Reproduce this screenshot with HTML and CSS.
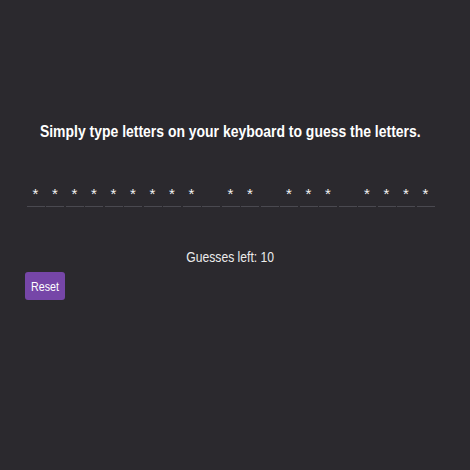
FILE: index.html
```html
<!DOCTYPE html>
<html>
<head>
<meta charset="utf-8">
<link rel="stylesheet" href="styles.css">
</head>
<body>
<main class="app">
  <h1 class="title"><span class="narrow narrow-title">Simply type letters on your keyboard to guess the letters.</span></h1>
  <div class="word">
    <span class="slot">*</span><span class="slot">*</span><span class="slot">*</span><span class="slot">*</span><span class="slot">*</span><span class="slot">*</span><span class="slot">*</span><span class="slot">*</span><span class="slot">*</span>
    <span class="slot"></span>
    <span class="slot">*</span><span class="slot">*</span>
    <span class="slot"></span>
    <span class="slot">*</span><span class="slot">*</span><span class="slot">*</span>
    <span class="slot"></span>
    <span class="slot">*</span><span class="slot">*</span><span class="slot">*</span><span class="slot">*</span>
  </div>
  <p class="guesses"><span class="narrow narrow-guesses">Guesses left: 10</span></p>
  <div class="controls">
    <button class="reset"><span class="narrow narrow-reset">Reset</span></button>
  </div>
</main>
</body>
</html>
```
FILE: styles.css
```css
html, body {
  margin: 0;
  padding: 0;
  background: #2b292e;
}
body {
  font-family: "Liberation Sans", Arial, sans-serif;
  color: #ffffff;
  width: 470px;
  height: 470px;
}
.app {
  display: flex;
  flex-direction: column;
  padding: 122px 9px 0 0;
}
.narrow {
  display: inline-block;
  white-space: nowrap;
  transform-origin: center;
}
.narrow-title {
  transform: scaleX(0.872);
}
.narrow-guesses {
  transform: scaleX(0.81);
}
.narrow-reset {
  transform: scaleX(0.82);
}
.title {
  margin: 0;
  font-size: 16px;
  line-height: 20px;
  font-weight: bold;
  text-align: center;
  white-space: nowrap;
}
.word {
  display: flex;
  justify-content: center;
  gap: 1.5px;
  margin-top: 42px;
}
.slot {
  width: 18px;
  height: 22px;
  border-bottom: 1px solid #4a4950;
  text-align: center;
  font-size: 15px;
  line-height: 20px;
  color: #f4f4f4;
}
.guesses {
  margin: 42px 0 0;
  font-size: 15px;
  line-height: 16px;
  text-align: center;
  color: #ececec;
}
.controls {
  display: flex;
  padding-left: 25px;
  margin-top: 7px;
}
.reset {
  display: flex;
  align-items: center;
  justify-content: center;
  width: 40px;
  height: 28px;
  padding: 0;
  border: none;
  border-radius: 3px;
  background: #7646a8;
  color: #ffffff;
  font-family: inherit;
  font-size: 13px;
}
```
